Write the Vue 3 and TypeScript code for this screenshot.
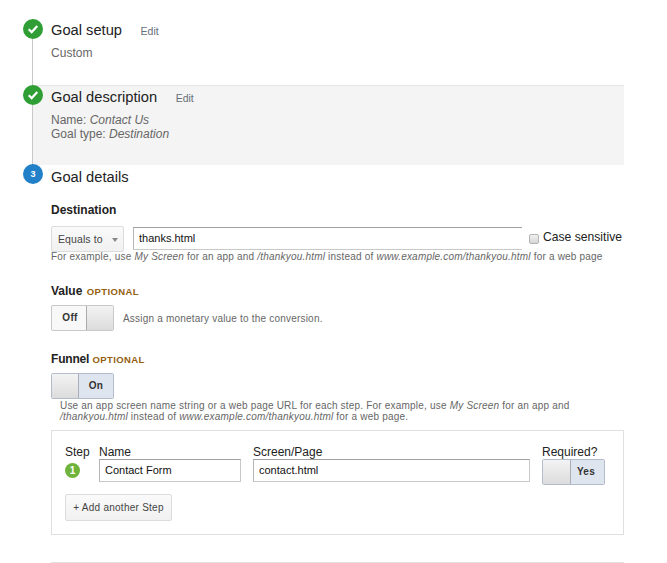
<script setup lang="ts">
const done = [
  { title: 'Goal setup', cls: 'plain' },
  { title: 'Goal description', cls: 'shaded' },
]
</script>

<template>
  <div class="page">
    <div class="done-steps">
      <section v-for="s in done" :key="s.title" class="step" :class="s.cls">
        <div class="head">
          <svg class="badge" width="20" height="20" viewBox="0 0 20 20">
            <circle cx="10" cy="10" r="10" fill="#2f9e35" />
            <path d="M5.7 10.3 8.7 13.1 14.3 7.1" fill="none" stroke="#fff" stroke-width="2.2" />
          </svg>
          <h2>{{ s.title }}</h2>
          <a class="edit">Edit</a>
        </div>
        <p v-if="s.cls === 'plain'" class="summary">Custom</p>
        <p v-else class="summary">Name: <em>Contact Us</em><br />Goal type: <em>Destination</em></p>
      </section>
    </div>

    <section class="details">
      <div class="head">
        <span class="badge num">3</span>
        <h2>Goal details</h2>
      </div>

      <div class="form">
        <h3 class="first">Destination</h3>
        <div class="dest-row">
          <div class="select">Equals to <i class="caret"></i></div>
          <div class="input wide">thanks.html</div>
          <span class="check"></span>
          <span class="check-label">Case sensitive</span>
        </div>
        <p class="hint">For example, use <em>My Screen</em> for an app and <em>/thankyou.html</em> instead of <em>www.example.com/thankyou.html</em> for a web page</p>

        <h3 class="value-h">Value <span class="opt">OPTIONAL</span></h3>
        <div class="value-row">
          <div class="toggle off"><b>Off</b><span class="knob"></span></div>
          <span class="assign">Assign a monetary value to the conversion.</span>
        </div>

        <h3 class="funnel-h"><span class="funnel-word">Funnel</span> <span class="opt">OPTIONAL</span></h3>
        <div class="toggle on"><span class="knob"></span><b>On</b></div>
        <p class="hint funnel-hint">Use an app screen name string or a web page URL for each step. For example, use <em>My Screen</em> for an app and<br /><em>/thankyou.html</em> instead of <em>www.example.com/thankyou.html</em> for a web page.</p>

        <div class="panel">
          <div class="panel-grid">
            <div class="col-step">
              <label>Step</label>
              <span class="step-num">1</span>
            </div>
            <div class="col-name">
              <label>Name</label>
              <div class="input">Contact Form</div>
            </div>
            <div class="col-page">
              <label>Screen/Page</label>
              <div class="input">contact.html</div>
            </div>
            <div class="col-req">
              <label>Required?</label>
              <div class="toggle on yes"><span class="knob"></span><b>Yes</b></div>
            </div>
          </div>
          <button class="add" type="button">+ Add another Step</button>
        </div>
        <hr class="rule" />
      </div>
    </section>
  </div>
</template>

<style>
html, body { margin: 0; background: #fff; }
</style>

<style scoped>
.page {
  width: 667px;
  height: 563px;
  overflow: hidden;
  font-family: "Liberation Sans", Arial, sans-serif;
  color: #222;
  box-sizing: border-box;
  padding-top: 19px;
}
.done-steps {
  margin-left: 32px;
  width: 592px;
  box-sizing: border-box;
  border-left: 1px solid #c8c8c8;
}
.step { padding-left: 18px; }
.plain { height: 66px; }
.shaded {
  height: 80px;
  box-sizing: border-box;
  background: #f4f4f4;
  border-top: 1px solid #e5e5e5;
}
.head {
  display: flex;
  align-items: center;
  height: 20px;
}
.shaded .head { margin-top: -1px; }
.badge {
  flex: none;
  width: 20px;
  height: 20px;
  margin-left: -28px;
  margin-right: 8px;
  display: block;
}
.num {
  margin-left: 0;
  border-radius: 50%;
  background: #2280c9;
  color: #fff;
  font-size: 9px;
  font-weight: 700;
  line-height: 20px;
  text-align: center;
}
h2 {
  margin: 2px 0 0;
  font-size: 14.7px;
  font-weight: 400;
  line-height: 20px;
  color: #222;
}
.shaded h2 { margin-top: 4px; }
.details h2 { margin-top: 6px; }
.edit {
  font-size: 10.5px;
  color: #666e78;
  margin-left: 18.5px;
  margin-top: 3px;
}
.shaded .edit { margin-top: 5px; }
.summary {
  margin: 8px 0 0;
  font-size: 12px;
  line-height: 14px;
  color: #666;
}
.plain .summary { margin-top: 7px; letter-spacing: 0.05px; }
.summary em { color: #666; }
.details {
  padding-left: 23px;
  margin-top: -1px;
}
.form {
  margin-left: 28px;
  width: 573px;
}
h3 {
  margin: 0;
  font-size: 12px;
  line-height: 14px;
  font-weight: 700;
  color: #222;
}
.first { margin-top: 19px; }
.opt {
  font-size: 9.5px;
  letter-spacing: 0.4px;
  color: #94600f;
  margin-left: 1px;
}
.funnel-word { letter-spacing: -0.2px; }
.funnel-h .opt { margin-left: 0; }
.dest-row {
  display: flex;
  align-items: center;
  margin-top: 9px;
  height: 26px;
}
.select {
  box-sizing: border-box;
  width: 73px;
  height: 26px;
  border: 1px solid #dcdcdc;
  border-radius: 2px;
  background: linear-gradient(#fafafa, #f1f1f1);
  font-size: 10.5px;
  color: #444;
  line-height: 24px;
  padding-left: 6px;
  letter-spacing: 0.1px;
  position: relative;
}
.caret {
  position: absolute;
  left: 60px;
  top: 11px;
  border: 3px solid transparent;
  border-top: 4px solid #888;
  border-bottom: 0;
}
.input {
  box-sizing: border-box;
  height: 23px;
  border: 1px solid #c9c9c9;
  border-top-color: #a0a0a0;
  border-left-color: #b5b5b5;
  background: #fff;
  font-size: 11px;
  line-height: 21px;
  padding-left: 5px;
  color: #111;
}
.wide {
  width: 389px;
  margin-left: 9px;
  margin-top: -2px;
  border-right: 0;
}
.check {
  box-sizing: border-box;
  width: 10px;
  height: 10px;
  margin-left: 7px;
  margin-top: -1px;
  border: 1px solid #b4b4b4;
  border-radius: 2px;
  background: linear-gradient(#f0f0f0, #d6d6d6);
}
.check-label {
  font-size: 12.15px;
  margin-left: 4px;
  margin-top: -5px;
  color: #222;
  white-space: nowrap;
}
.hint {
  margin: -1px 0 0;
  font-size: 10px;
  line-height: 11px;
  letter-spacing: 0.2px;
  color: #666;
  white-space: nowrap;
}
.value-h { margin-top: 22px; }
.value-row {
  display: flex;
  align-items: center;
  margin-top: 6px;
}
.toggle {
  box-sizing: border-box;
  display: flex;
  width: 63px;
  height: 26px;
  border: 1px solid #c8c8c8;
  border-radius: 2px;
  background: #f8f8f8;
  font-size: 10px;
  overflow: hidden;
}
.toggle b {
  flex: 1;
  text-align: center;
  line-height: 24px;
  color: #333;
  letter-spacing: 0.3px;
}
.off b { padding-left: 2px; }
.knob {
  flex: none;
  width: 26px;
  background: linear-gradient(#f3f3f3, #dcdcdc);
}
.off .knob { border-left: 1px solid #aaa; }
.on .knob { border-right: 1px solid #a9afb8; }
.on { border-color: #b3bccb; }
.on b { background: #dfe5ef; }
.assign {
  font-size: 10px;
  letter-spacing: 0.2px;
  color: #666;
  margin-left: 9px;
}
.funnel-h { margin-top: 21px; }
.funnel-h + .toggle { margin-top: 6px; }
.funnel-hint {
  margin: 1px 0 0 9px;
}
.panel {
  box-sizing: border-box;
  width: 573px;
  height: 105px;
  margin-top: 8px;
  border: 1px solid #e0e0e0;
  padding: 14px 13px 0;
}
.panel-grid {
  display: grid;
  grid-template-columns: 34px 142px 289px 75px;
  column-gap: 0;
}
.col-page, .col-req { margin-left: 12px; }
.panel-grid label {
  display: block;
  font-size: 12px;
  line-height: 14px;
  color: #222;
  height: 14px;
}
.step-num {
  display: block;
  width: 15px;
  height: 15px;
  margin-top: 4px;
  border-radius: 50%;
  background: #6fb33a;
  color: #fff;
  font-size: 10px;
  font-weight: 700;
  line-height: 15px;
  text-align: center;
}
.yes { height: 26px; }
.yes .knob { width: 27px; }
.yes b { padding-right: 3px; }
.add {
  display: block;
  box-sizing: border-box;
  width: 107px;
  height: 27px;
  margin-top: 9px;
  padding: 0;
  border: 1px solid #dcdcdc;
  border-radius: 2px;
  background: linear-gradient(#fafafa, #f1f1f1);
  font: 10px "Liberation Sans", Arial, sans-serif;
  letter-spacing: 0.25px;
  color: #444;
}
.rule {
  margin: 27px 0 0;
  border: 0;
  border-top: 1px solid #e0e0e0;
}
</style>
